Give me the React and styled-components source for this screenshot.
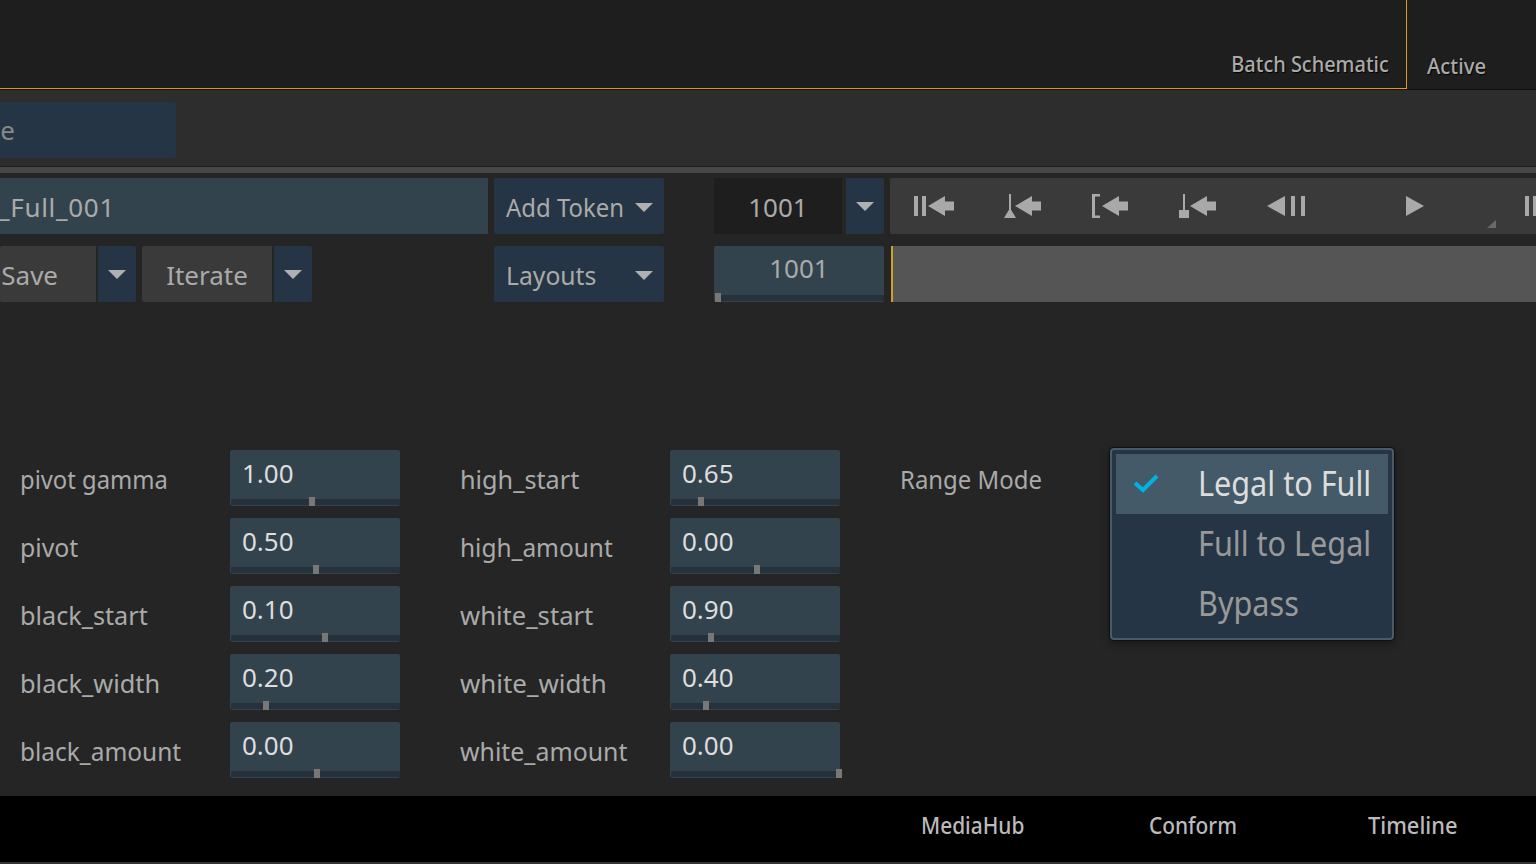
import React from 'react'
import styled, { createGlobalStyle } from 'styled-components'

const GlobalStyle = createGlobalStyle`
  html, body {
    margin: 0;
    padding: 0;
    background: #252525;
  }
  * {
    box-sizing: border-box;
  }
`
const Page = styled.div`
  width: 1536px;
  height: 864px;
  overflow: hidden;
  display: flex;
  flex-direction: column;
  background: #252525;
  color: #aaa;
  font-family: 'Noto Sans', sans-serif;
  font-size: 26px;
`
const Narrow = styled.span`
  display: inline-block;
  white-space: nowrap;
  transform: scaleX(${(props) => props.$scale || 0.94});
  transform-origin: ${(props) => props.$origin || 'left'} center;
`
const Header = styled.header`
  height: 90px;
  flex: none;
  display: flex;
  background: #1e1e1e;
  border-bottom: 1px solid #0e0e0e;
`
const BatchTab = styled.div`
  width: 1407px;
  height: 89px;
  display: flex;
  justify-content: flex-end;
  align-items: flex-end;
  padding: 0 17px 10px 0;
  border-right: 1px solid #e59a00;
  border-bottom: 1px solid #e59a00;
  font-size: 21px;
  font-weight: 500;
  text-shadow: 1px 1px 1px #000;
`
const ActiveTab = styled.div`
  display: flex;
  align-items: flex-end;
  padding: 0 0 9px 20px;
  font-size: 21px;
  font-weight: 500;
  text-shadow: 1px 1px 1px #000;
`
const NameBand = styled.div`
  height: 77px;
  flex: none;
  padding-top: 12px;
  background: #2d2d2d;
  border-bottom: 1px solid #1f1f1f;
`
const CropButton = styled.div`
  width: 176px;
  height: 56px;
  display: flex;
  align-items: center;
  justify-content: flex-end;
  overflow: hidden;
  white-space: nowrap;
  padding-right: 161px;
  background: #263545;
  border-radius: 0 2px 2px 0;
  color: #888;
`
const Divider = styled.div`
  height: 6px;
  flex: none;
  background: #474747;
`
const Main = styled.main`
  flex: 1;
  display: flex;
  flex-direction: column;
  padding-top: 5px;
`
const ToolRow = styled.div`
  height: 56px;
  display: flex;
  margin-bottom: 12px;
`
const LeftGroup = styled.div`
  width: 664px;
  flex: none;
  display: flex;
  gap: 6px;
`
const MidGroup = styled.div`
  width: 170px;
  flex: none;
  margin-left: 50px;
  display: flex;
  gap: 4px;
`
const NameInput = styled.div`
  width: 488px;
  display: flex;
  align-items: center;
  justify-content: flex-end;
  overflow: hidden;
  white-space: nowrap;
  padding: 2px 373px 0 0;
  letter-spacing: 0.7px;
  background: #33434e;
`
const DropButton = styled.div`
  width: 170px;
  margin-left: ${(props) => (props.$push ? 'auto' : '0')};
  display: flex;
  align-items: center;
  justify-content: space-between;
  padding: 2px 11px 0 12px;
  background: #263545;
  border-radius: 2px;
`
const PlainButton = styled.div`
  width: ${(props) => props.$width}px;
  display: flex;
  align-items: center;
  justify-content: ${(props) => (props.$end ? 'flex-end' : 'center')};
  padding: 2px ${(props) => (props.$end ? 38 : 0)}px 0 0;
  background: #3a3a3a;
  border-radius: 2px 0 0 2px;
`
const ArrowButton = styled.div`
  width: 38px;
  flex: none;
  display: flex;
  align-items: center;
  justify-content: center;
  margin-left: ${(props) => (props.$flush ? 0 : 2)}px;
  background: #263545;
  border-radius: 0 2px 2px 0;
`
const SplitGroup = styled.div`
  display: flex;
`
const Caret = styled.span`
  width: 0;
  height: 0;
  border-left: 9px solid transparent;
  border-right: 9px solid transparent;
  border-top: 9px solid #b0b0b0;
`
const FrameBox = styled.div`
  flex: 1;
  display: flex;
  align-items: center;
  justify-content: center;
  padding-top: 2px;
  background: #1e1e1e;
  border-radius: 2px 0 0 2px;
`
const FrameSlider = styled.div`
  position: relative;
  width: 170px;
  height: 56px;
  padding-top: 7px;
  text-align: center;
  line-height: 30px;
  background: #33434e;
  border-radius: 2px;
`
const Transport = styled.div`
  position: relative;
  flex: 1;
  margin-left: 6px;
  display: flex;
  align-items: center;
  gap: 50px;
  padding-left: 24px;
  overflow: hidden;
  background: #3a3a3a;
  border-radius: 2px 0 0 2px;
`
const TransportIcon = styled.svg`
  flex: none;
  fill: #a9a9a9;
  margin-left: ${(props) => props.$gap || 0}px;
`
const CornerMark = styled.svg`
  position: absolute;
  left: 597px;
  top: 42px;
  fill: #6a6a6a;
`
const Timeline = styled.div`
  flex: 1;
  margin-left: 7px;
  background: #555;
  border-left: 2px solid #c9a227;
`
const ParamGrid = styled.div`
  display: flex;
  padding: 136px 0 0 20px;
`
const ParamColumn = styled.div`
  display: flex;
  flex-direction: column;
  gap: 12px;
  margin-right: 60px;
`
const ParamRow = styled.div`
  display: flex;
  align-items: center;
  height: 56px;
`
const ParamLabel = styled.span`
  width: 210px;
  padding-top: 1px;
`
const ParamField = styled.div`
  position: relative;
  width: 170px;
  height: 56px;
  padding: 7px 12px 0;
  line-height: 32px;
  color: #ddd;
  background: #33434e;
  border-radius: 2px;
`
const Track = styled.div`
  position: absolute;
  left: 1px;
  right: 0;
  bottom: 1px;
  height: 6px;
  background: #25323c;
`
const Knob = styled.div`
  position: absolute;
  bottom: 0;
  width: 6px;
  height: 9px;
  background: #777;
`
const RangeColumn = styled.div`
  display: flex;
  align-items: flex-start;
`
const Menu = styled.div`
  position: relative;
  width: 284px;
  height: 192px;
  margin-top: -2px;
  padding: 4px;
  font-size: 34px;
  background: #263545;
  border: 2px solid #4a5a66;
  border-radius: 4px;
  box-shadow: 0 0 0 1px #111, 0 2px 8px rgba(0, 0, 0, 0.5);
`
const MenuItem = styled.div`
  height: 60px;
  display: flex;
  align-items: center;
  padding-bottom: 2px;
  color: ${(props) => (props.$active ? '#ddd' : '#999')};
  background: ${(props) => (props.$active ? '#455a68' : 'transparent')};
`
const CheckSlot = styled.span`
  width: 82px;
  flex: none;
  display: flex;
  padding-left: 17px;
`
const Footer = styled.footer`
  height: 68px;
  flex: none;
  margin-top: auto;
  display: grid;
  grid-template-columns: 228px 219px auto;
  align-items: center;
  padding: 0 0 10px 921px;
  font-size: 24px;
  font-weight: 500;
  color: #bbb;
  background: #000;
  border-bottom: 2px solid #333;
`

const params = [
  [
    ['pivot gamma', '1.00', 79, 0.915],
    ['pivot', '0.50', 83, 0.955],
    ['black_start', '0.10', 92, 0.97],
    ['black_width', '0.20', 33, 0.975],
    ['black_amount', '0.00', 84, 0.94],
  ],
  [
    ['high_start', '0.65', 28, 0.97],
    ['high_amount', '0.00', 84, 0.94],
    ['white_start', '0.90', 38, 0.985],
    ['white_width', '0.40', 33, 0.995],
    ['white_amount', '0.00', 166, 0.957],
  ],
]

const LeftArrow = ({ x }) => (
  <path d={`M${x} 12 L${x + 17} 2 V7.5 H${x + 26} V16.5 H${x + 17} V22 Z`} />
)

const App = () => {
  return (
    <Page>
      <GlobalStyle />
      <Header>
        <BatchTab>
          <Narrow $scale={0.95} $origin="right">
            Batch Schematic
          </Narrow>
        </BatchTab>
        <ActiveTab>
          <Narrow $scale={0.97}>Active</Narrow>
        </ActiveTab>
      </Header>
      <NameBand>
        <CropButton>Update</CropButton>
      </NameBand>
      <Divider />
      <Main>
        <ToolRow>
          <LeftGroup>
            <NameInput>Legal_to_Full_001</NameInput>
            <DropButton>
              <Narrow $scale={0.92}>Add Token</Narrow>
              <Caret />
            </DropButton>
          </LeftGroup>
          <MidGroup>
            <FrameBox>1001</FrameBox>
            <ArrowButton $flush>
              <Caret />
            </ArrowButton>
          </MidGroup>
          <Transport>
            <TransportIcon width="40" height="24" viewBox="0 0 40 24">
              <rect x="0" y="2" width="4" height="20" />
              <rect x="8" y="2" width="4" height="20" />
              <LeftArrow x={14} />
            </TransportIcon>
            <TransportIcon width="38" height="24" viewBox="0 0 38 24">
              <rect x="5" y="0" width="2" height="16" />
              <path d="M0 24 L6 14 L12 24 Z" />
              <LeftArrow x={11} />
            </TransportIcon>
            <TransportIcon width="37" height="24" viewBox="0 0 37 24">
              <path d="M0 0 H8 V2.5 H3 V21.5 H8 V24 H0 Z" />
              <LeftArrow x={10} />
            </TransportIcon>
            <TransportIcon width="38" height="24" viewBox="0 0 38 24">
              <rect x="4" y="0" width="2" height="16" />
              <rect x="0" y="16" width="10" height="8" />
              <LeftArrow x={11} />
            </TransportIcon>
            <TransportIcon width="38" height="24" viewBox="0 0 38 24">
              <path d="M0 12 L18 2 V22 Z" />
              <rect x="24" y="2" width="4" height="20" />
              <rect x="34" y="2" width="4" height="20" />
            </TransportIcon>
            <TransportIcon $gap={51} width="18" height="24" viewBox="0 0 18 24">
              <path d="M0 2 L18 12 L0 22 Z" />
            </TransportIcon>
            <TransportIcon $gap={51} width="16" height="24" viewBox="0 0 16 24">
              <rect x="0" y="2" width="4" height="20" />
              <rect x="8" y="2" width="4" height="20" />
            </TransportIcon>
            <CornerMark width="9" height="8" viewBox="0 0 9 8">
              <path d="M0 8 L9 0 V8 Z" />
            </CornerMark>
          </Transport>
        </ToolRow>
        <ToolRow>
          <LeftGroup>
            <SplitGroup>
              <PlainButton $width={96} $end>
                Save
              </PlainButton>
              <ArrowButton>
                <Caret />
              </ArrowButton>
            </SplitGroup>
            <SplitGroup>
              <PlainButton $width={130}>Iterate</PlainButton>
              <ArrowButton>
                <Caret />
              </ArrowButton>
            </SplitGroup>
            <DropButton $push>
              <Narrow $scale={0.95}>Layouts</Narrow>
              <Caret />
            </DropButton>
          </LeftGroup>
          <MidGroup>
            <FrameSlider>
              1001
              <Track />
              <Knob style={{ left: 1 }} />
            </FrameSlider>
          </MidGroup>
          <Timeline />
        </ToolRow>
        <ParamGrid>
          {params.map((column) => (
            <ParamColumn key={column[0][0]}>
              {column.map(([label, value, knob, squeeze]) => (
                <ParamRow key={label}>
                  <ParamLabel>
                    <Narrow $scale={squeeze}>{label}</Narrow>
                  </ParamLabel>
                  <ParamField>
                    {value}
                    <Track />
                    <Knob style={{ left: knob }} />
                  </ParamField>
                </ParamRow>
              ))}
            </ParamColumn>
          ))}
          <RangeColumn>
            <ParamRow>
              <ParamLabel>
                <Narrow $scale={0.92}>Range Mode</Narrow>
              </ParamLabel>
            </ParamRow>
            <Menu>
              <MenuItem $active>
                <CheckSlot>
                  <svg width="26" height="20" viewBox="0 0 26 20" fill="none">
                    <path d="M2 10 L10 17 L24 3" stroke="#00b2e6" strokeWidth="4" />
                  </svg>
                </CheckSlot>
                <Narrow $scale={0.9}>Legal to Full</Narrow>
              </MenuItem>
              <MenuItem>
                <CheckSlot />
                <Narrow $scale={0.9}>Full to Legal</Narrow>
              </MenuItem>
              <MenuItem>
                <CheckSlot />
                <Narrow $scale={0.9}>Bypass</Narrow>
              </MenuItem>
            </Menu>
          </RangeColumn>
        </ParamGrid>
        <Footer>
          <Narrow $scale={0.87}>MediaHub</Narrow>
          <Narrow $scale={0.87}>Conform</Narrow>
          <Narrow $scale={0.91}>Timeline</Narrow>
        </Footer>
      </Main>
    </Page>
  )
}

export default App
